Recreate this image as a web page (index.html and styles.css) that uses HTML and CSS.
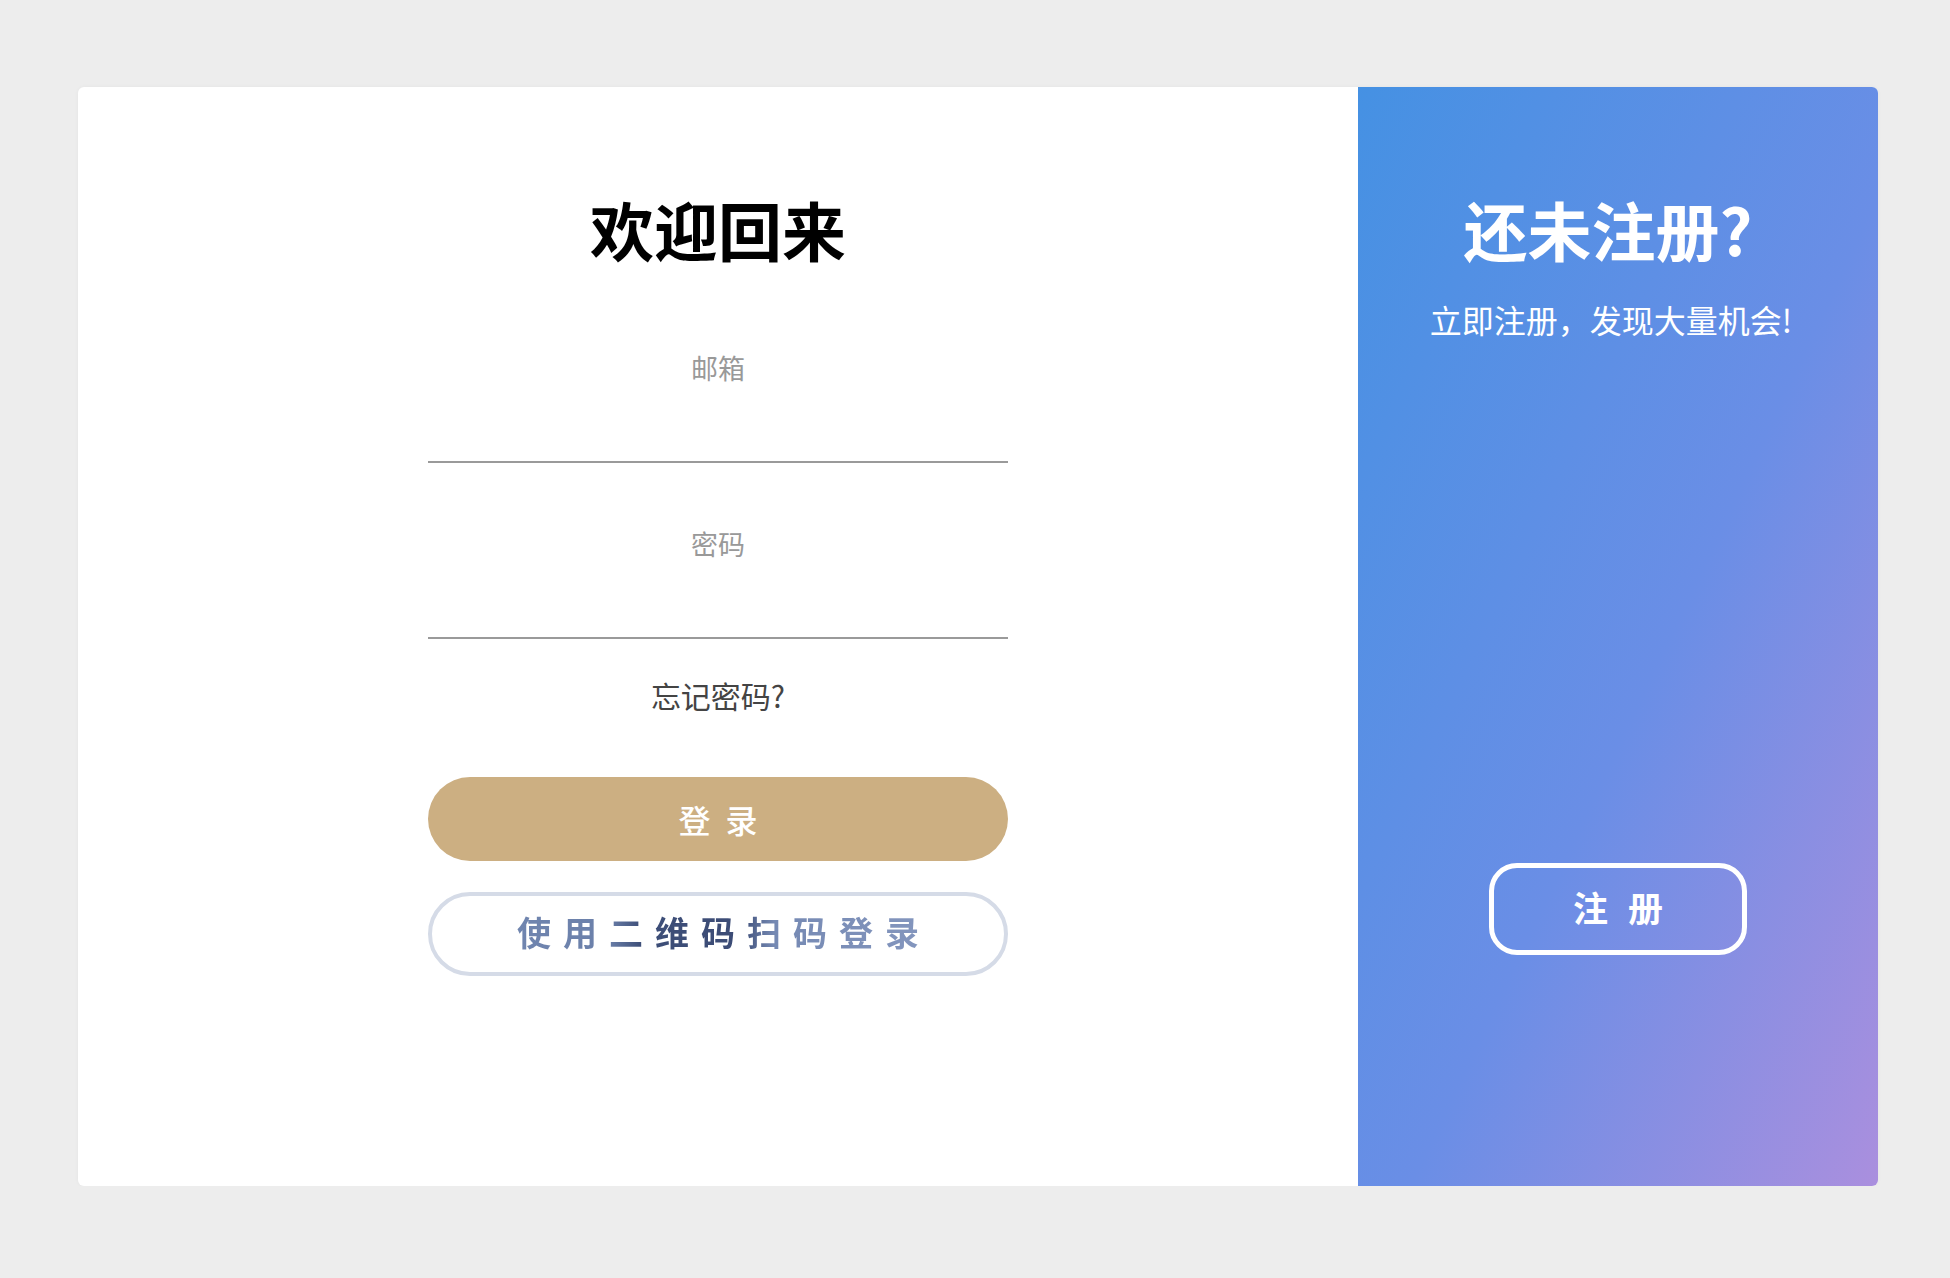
FILE: index.html
```html
<!DOCTYPE html>
<html lang="zh-CN">
<head>
    <meta charset="UTF-8">
    <meta name="viewport" content="width=device-width, initial-scale=1.0">
    <title>登录</title>
    <link rel="stylesheet" href="styles.css">
</head>
<body>
    <div class="card">
        <div class="login-panel">
            <h2 class="title">欢迎回来</h2>
            <form class="login-form">
                <input type="text" class="field" name="email" placeholder="邮箱">
                <input type="password" class="field field-pwd" name="password" placeholder="密码">
                <a class="forgot" href="#">忘记密码?</a>
                <button type="submit" class="btn-login">登录</button>
                <button type="button" class="btn-qr"><span>使用二维码扫码登录</span></button>
            </form>
        </div>
        <div class="signup-panel">
            <h2 class="title title-light">还未注册?</h2>
            <p class="subtitle">立即注册，发现大量机会!</p>
            <button type="button" class="btn-signup">注册</button>
        </div>
    </div>
</body>
</html>
```

FILE: styles.css
```css
/* page */
body {
    margin: 0;
    padding: 87px 0 0 78px;
    background-color: #ededed;
    font-family: "Noto Sans CJK SC", "Noto Sans", sans-serif;
}
.card {
    display: flex;
    width: 1800px;
    height: 1099px;
    background-color: #fff;
    border-radius: 6px;
    overflow: hidden;
    box-shadow: 0 0 4px rgba(0, 0, 0, 0.04);
}

/* left side */
.login-panel {
    flex: 1;
    display: flex;
    flex-direction: column;
    align-items: center;
    padding-top: 109px;
}
.title {
    margin: 0;
    font-size: 64px;
    line-height: 64px;
    font-weight: 700;
    color: #000;
}
.login-form {
    display: flex;
    flex-direction: column;
    align-items: center;
    width: 580px;
    margin-top: 87px;
}
.field {
    box-sizing: content-box;
    width: 100%;
    height: 40px;
    padding: 0 0 74px;
    border: none;
    border-bottom: 2px solid #9a9a9a;
    outline: none;
    background: transparent;
    font-family: inherit;
    font-size: 27px;
    text-align: center;
    color: #333;
}
.field::placeholder {
    color: #999;
}
.field-pwd {
    margin-top: 60px;
}
.forgot {
    margin-top: 36px;
    font-size: 30px;
    line-height: 40px;
    color: #444;
    text-decoration: none;
}
.btn-login {
    width: 100%;
    height: 84px;
    margin-top: 62px;
    padding-bottom: 2px;
    border: none;
    border-radius: 42px;
    background-color: #ccaf82;
    color: #fff;
    font-family: inherit;
    font-size: 32px;
    font-weight: 500;
    letter-spacing: 15px;
    text-indent: 15px;
    cursor: pointer;
}
.btn-qr {
    width: 100%;
    height: 84px;
    margin-top: 31px;
    padding-bottom: 6px;
    border: 4px solid #d5dbe7;
    border-radius: 42px;
    background-color: #fff;
    font-family: inherit;
    cursor: pointer;
}
.btn-qr span {
    display: inline-block;
    font-size: 34px;
    font-weight: 700;
    letter-spacing: 12px;
    margin-left: 12px;
    background: linear-gradient(90deg, #7085af 0%, #6b80aa 22%, #3d4e78 30%, #3c4c76 54%, #7589b3 62%, #8496be 100%);
    -webkit-background-clip: text;
    background-clip: text;
    color: transparent;
}

/* right side */
.signup-panel {
    width: 520px;
    display: flex;
    flex-direction: column;
    align-items: center;
    padding-top: 109px;
    background: linear-gradient(to bottom right, #4591e3 0%, #6a8ee6 55%, #aa8fde 100%);
    color: #fff;
}
.title-light {
    color: #fff;
    margin-right: 20px;
}
.subtitle {
    margin: 39px 14px 0 0;
    font-size: 32px;
    line-height: 40px;
}
.btn-signup {
    width: 258px;
    height: 92px;
    margin-top: 524px;
    padding-bottom: 6px;
    border: 5px solid #fff;
    border-radius: 28px;
    background: transparent;
    color: #fff;
    font-family: inherit;
    font-size: 35px;
    font-weight: 700;
    letter-spacing: 20px;
    text-indent: 20px;
    cursor: pointer;
}
```
